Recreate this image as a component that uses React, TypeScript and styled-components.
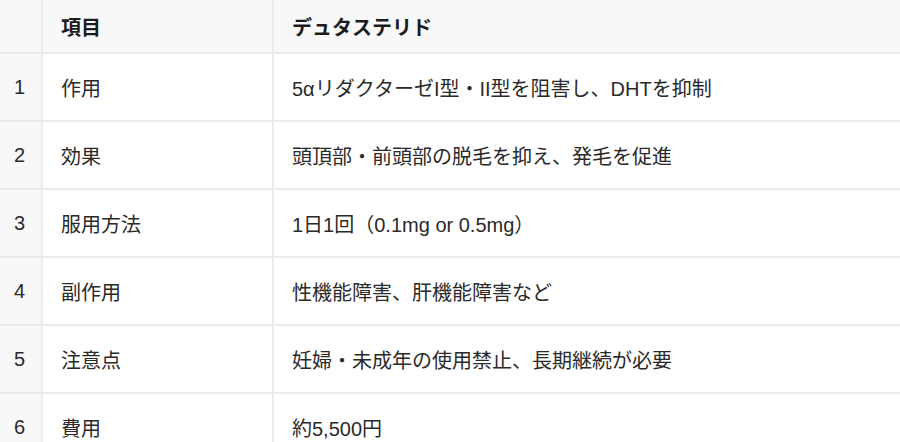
import React from 'react';
import styled, { createGlobalStyle } from 'styled-components';

const GlobalStyle = createGlobalStyle`
    html, body {
        margin: 0;
        padding: 0;
        background: #ffffff;
    }
    body {
        font-family: "Liberation Sans", "Noto Sans CJK JP", sans-serif;
        color: #2c2c2c;
    }
`;

const Table = styled.div`
    display: flex;
    flex-direction: column;
    width: 900px;
`;

const Row = styled.div<{ $header?: boolean }>`
    display: grid;
    grid-template-columns: 43px 231px 1fr;
    height: ${p => (p.$header ? '54px' : '68px')};
    box-sizing: border-box;
    border-bottom: 2px solid #ebebeb;
    background-color: ${p => (p.$header ? '#f8f8f8' : '#ffffff')};
    flex-shrink: 0;
`;

const Cell = styled.div<{ $header?: boolean }>`
    display: flex;
    align-items: center;
    box-sizing: border-box;
    padding-left: 18px;
    font-size: 20px;
    font-weight: ${p => (p.$header ? 600 : 400)};
    color: ${p => (p.$header ? '#1c1c1c' : '#2a2a2a')};
    border-right: 2px solid #ebebeb;
    white-space: nowrap;

    &:last-child {
        border-right: none;
    }
`;

const IndexCell = styled(Cell)`
    padding-left: 14px;
    background-color: #f8f8f8;
`;

const rows = [
    ['作用', '5αリダクターゼI型・II型を阻害し、DHTを抑制'],
    ['効果', '頭頂部・前頭部の脱毛を抑え、発毛を促進'],
    ['服用方法', '1日1回（0.1mg or 0.5mg）'],
    ['副作用', '性機能障害、肝機能障害など'],
    ['注意点', '妊婦・未成年の使用禁止、長期継続が必要'],
    ['費用', '約5,500円'],
];

const App = () => {
    return (
        <>
            <GlobalStyle />
            <Table>
                <Row $header>
                    <IndexCell $header />
                    <Cell $header>項目</Cell>
                    <Cell $header>デュタステリド</Cell>
                </Row>
                {rows.map(([item, value], i) => (
                    <Row key={i}>
                        <IndexCell>{i + 1}</IndexCell>
                        <Cell>{item}</Cell>
                        <Cell>{value}</Cell>
                    </Row>
                ))}
            </Table>
        </>
    );
};

export default App;
